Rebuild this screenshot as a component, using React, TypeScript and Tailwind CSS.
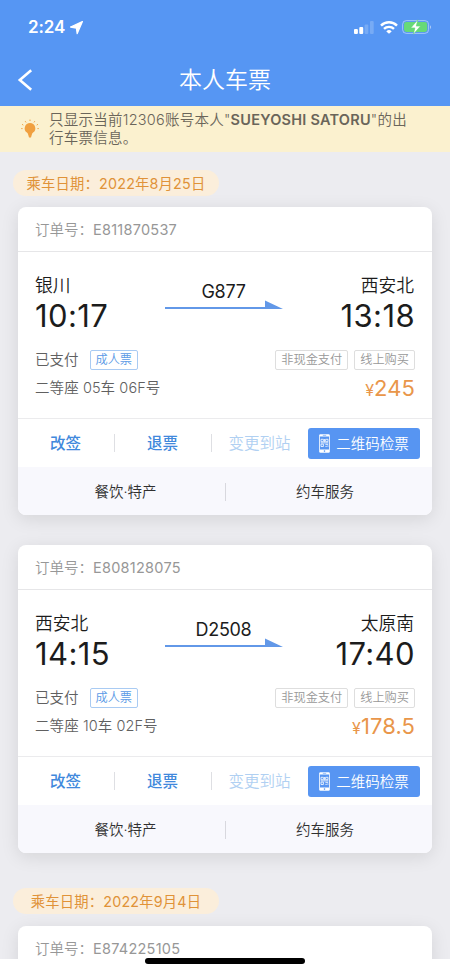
import React from 'react';

// --- Types ---
interface Ticket {
  order: string;
  from: string;
  to: string;
  depart: string;
  arrive: string;
  train: string;
  seat: string;
  price: string;
}

const tickets: Ticket[] = [
  { order: 'E811870537', from: '银川', to: '西安北', depart: '10:17', arrive: '13:18', train: 'G877', seat: '二等座 05车 06F号', price: '245' },
  { order: 'E808128075', from: '西安北', to: '太原南', depart: '14:15', arrive: '17:40', train: 'D2508', seat: '二等座 10车 02F号', price: '178.5' },
];

// --- Status bar ---
const StatusBar = () => (
  <div className="h-[53px] flex items-center justify-between pl-[28px] pr-[18px] pt-px">
    <div className="flex items-center gap-[4px]">
      <span className="text-[17px] leading-5 font-semibold tracking-[-0.1px]">2:24</span>
      <svg width="15" height="15" viewBox="0 0 15 15" fill="currentColor" stroke="currentColor" strokeWidth="1.3" strokeLinejoin="round">
        <path d="M13.4 1.6 1.6 7l5.8 1 .8 5.6Z" />
      </svg>
    </div>
    <div className="flex items-center">
      <svg width="20" height="13" viewBox="0 0 20 13" fill="currentColor">
        <rect x="0" y="8" width="3.9" height="5" rx="1" />
        <rect x="5.3" y="6" width="3.9" height="7" rx="1" />
        <rect x="10.6" y="3.5" width="3.7" height="9.5" rx="1" opacity=".2" />
        <rect x="16" y="0" width="3.7" height="13" rx="1" opacity=".2" />
      </svg>
      <svg className="ml-[6px]" width="18" height="13" viewBox="0 0 18 13" fill="none" stroke="currentColor" strokeWidth="2.4">
        <path d="M1 4.6a11.3 11.3 0 0 1 16 0" />
        <path d="M4 7.9a7.1 7.1 0 0 1 10 0" />
        <path d="M9 12.8 6.3 10.4a3.8 3.8 0 0 1 5.4 0Z" fill="currentColor" stroke="none" />
      </svg>
      <svg className="ml-[4px]" width="30" height="16" viewBox="0 0 30 16">
        <rect x=".6" y="1.6" width="26" height="12.8" rx="3.8" fill="none" stroke="#fff" strokeOpacity=".45" />
        <rect x="2" y="3" width="23.2" height="10" rx="2.4" fill="#67d978" />
        <path d="M28 6.2v3.8c1.4-.6 1.4-3.2 0-3.8Z" fill="#fff" fillOpacity=".5" />
        <path d="M15.8.8 8.8 8.9h4.1L11.4 15.2l7.1-8.1h-4.2L15.8.8Z" fill="#fff" stroke="#67d978" strokeWidth=".6" />
      </svg>
    </div>
  </div>
);

const BulbIcon = () => (
  <svg width="18" height="20" viewBox="0 0 18 20" fill="#f0a040">
    <path d="M9 4a5.3 5.3 0 0 0-3.1 9.6c.7.5 1 1 1.1 1.7h4c.1-.7.4-1.2 1.1-1.7A5.3 5.3 0 0 0 9 4Z" />
    <path d="M7 15h4L10 18.4H8Z" />
    <g stroke="#f0a040" strokeWidth="1" strokeLinecap="round">
      <path d="M9 1v.6M4.4 2.5l.4.6M13.6 2.5l-.4.6M1.4 5.5l.6.4M16.6 5.5l-.6.4M.6 9.6h.6M16.8 9.6h.6" />
    </g>
  </svg>
);

const QrPhoneIcon = () => (
  <svg width="11" height="19" viewBox="0 0 11 19">
    <rect x=".2" y=".2" width="10.6" height="18.6" rx="1.2" fill="#fff" />
    <path d="M1 2.6h9v12.8H1z" fill="#5795f2" />
    <path d="M3.8 1.4h3.4" stroke="#5795f2" strokeWidth=".6" />
    <circle cx="5.5" cy="17.1" r=".8" fill="#5795f2" />
    <g fill="none" stroke="#fff" strokeWidth=".8">
      <path d="M2 5.3h2.4v2.4H2zM6.6 5.3H9v2.4H6.6zM2 10.1h2.4v2.4H2zM5.5 5v3.2M1.6 8.9h7.8M6.4 10.4h2.8M6.4 12.4h1.4M8.9 11.4v1.4" />
    </g>
  </svg>
);

const Banner = () => (
  <div className="h-[46px] flex items-start bg-[#fbf1cf] pl-[21px] pt-[5px] text-[#6a655a]">
    <div className="mt-[8px]"><BulbIcon /></div>
    <p className="ml-[10px] text-[14.5px] leading-[18px] tracking-[0.24px] whitespace-nowrap">
      只显示当前12306账号本人"<b className="font-semibold">SUEYOSHI SATORU</b>"的出
      <br />
      行车票信息。
    </p>
  </div>
);

const DatePill = ({ date }: { date: string }) => (
  <div className="ml-[13px] w-[206px] h-[26px] pt-px rounded-full bg-[#fbeedb] text-[#e09238] flex items-center justify-center text-[14.3px] font-normal tracking-[0.2px]">
    乘车日期：{date}
  </div>
);

const OrderHead = ({ order }: { order: string }) => (
  <div className="h-[45px] pt-px border-b border-[#e6e6e8] px-[17px] flex items-center text-[14.5px] text-[#979797]">
    订单号：<span className="font-normal tracking-[0.25px]">{order}</span>
  </div>
);

const Tag = ({ children }: { children: React.ReactNode }) => (
  <span className="h-5 px-[5px] flex items-center border border-[#dedede] rounded-xs text-[12.2px] text-[#989898]">{children}</span>
);

// --- Ticket card ---
const TicketCard = ({ ticket }: { ticket: Ticket }) => (
  <div className="mx-[18px] h-[308px] rounded-lg overflow-hidden bg-white shadow-[0_4px_18px_rgba(0,0,0,0.1)]">
    <OrderHead order={ticket.order} />
    <div className="h-[167px] border-b border-[#ebebed] px-[17px] pt-[22px]">
      <div className="flex justify-between text-[#1c1c1c]">
        <div className="w-[120px]">
          <div className="text-[17.8px] leading-6">{ticket.from}</div>
          <div className="text-[31px] leading-[36px] font-normal tracking-[0.4px]">{ticket.depart}</div>
        </div>
        <div className="w-[120px] flex flex-col items-center pt-[8px]">
          <div className="text-[18px] leading-5 font-normal tracking-[-0.3px] pr-[3px]">{ticket.train}</div>
          <svg className="-ml-[2px] -mt-[2px]" width="120" height="10" viewBox="0 0 120 10" fill="#6298e8">
            <path d="M1 7h100V.5L119 9H1Z" />
          </svg>
        </div>
        <div className="w-[120px] text-right">
          <div className="text-[17.8px] leading-6 pr-px">{ticket.to}</div>
          <div className="text-[31px] leading-[36px] font-normal tracking-[0.4px]">{ticket.arrive}</div>
        </div>
      </div>
      <div className="mt-[16px] h-5 flex items-center text-[14.5px] text-[#606060]">
        <span>已支付</span>
        <span className="ml-[11px] h-5 px-[5px] flex items-center border border-[#a9cbf3] rounded-xs text-[12.2px] text-[#5a9ae6]">成人票</span>
        <div className="ml-auto flex gap-[6px]">
          <Tag>非现金支付</Tag>
          <Tag>线上购买</Tag>
        </div>
      </div>
      <div className="mt-[6px] h-6 flex items-center justify-between text-[14.5px] text-[#606060]">
        <span className="tracking-[0.08px]">{ticket.seat}</span>
        <span className="text-[#e9964a] text-[22px] font-normal tracking-[0.1px]"><span className="text-base">¥</span>{ticket.price}</span>
      </div>
    </div>
    <div className="h-[48px] flex items-center text-[15.5px] text-[#4189dc]">
      <div className="w-[95px] pt-[2px] text-center font-medium">改签</div>
      <div className="ml-px w-px h-[18px] bg-[#dedfe3]" />
      <div className="w-[95px] pt-[2px] text-center font-medium">退票</div>
      <div className="ml-px w-px h-[18px] bg-[#dedfe3]" />
      <div className="w-[96px] pt-[2px] pr-px text-center text-[#b0d0f2]">变更到站</div>
      <button className="w-[112px] h-[31px] rounded-[3px] bg-[#5795f2] text-white text-[14.5px] flex items-center justify-center gap-[6px]">
        <QrPhoneIcon />
        <span className="pt-px">二维码检票</span>
      </button>
    </div>
    <div className="h-[48px] bg-[#f8f8fd] flex items-center text-[14.5px] text-[#303030] pt-px">
      <div className="w-[207px] pl-[8px] text-center">餐饮·特产</div>
      <div className="w-px h-[18px] bg-[#d8d8de]" />
      <div className="flex-1 pr-[8px] text-center">约车服务</div>
    </div>
  </div>
);

export default function App() {
  return (
    <div className="relative w-[450px] h-[974px] flex flex-col overflow-hidden bg-white font-[350] font-['Inter','Noto_Sans_CJK_SC',sans-serif]">
      <header className="h-[106px] shrink-0 bg-[#5696f3] text-white">
        <StatusBar />
        <div className="h-[53px] grid grid-cols-[60px_1fr_60px] items-center">
          <svg className="ml-[17px]" width="16" height="22" viewBox="0 0 16 22" fill="none" stroke="currentColor" strokeWidth="2.6">
            <path d="M14.2 1.2 2.8 11l11.4 9.8" />
          </svg>
          <h1 className="text-[23px] leading-8 text-center">本人车票</h1>
        </div>
      </header>
      <div className="shrink-0"><Banner /></div>
      <main className="flex-1 min-h-0 overflow-hidden bg-[#ececf0] pt-[18px]">
        <DatePill date="2022年8月25日" />
        <div className="mt-[11px] flex flex-col gap-[30px]">
          {tickets.map((ticket) => (
            <TicketCard key={ticket.order} ticket={ticket} />
          ))}
        </div>
        <div className="mt-[35px]"><DatePill date="2022年9月4日" /></div>
        <div className="mt-[12px] mx-[18px] h-[308px] rounded-lg bg-white shadow-[0_4px_18px_rgba(0,0,0,0.1)]">
          <OrderHead order="E874225105" />
        </div>
      </main>
      <div className="h-[15px] shrink-0 bg-white" />
      <div className="absolute left-[145px] top-[958px] w-[160px] h-[6px] rounded-full bg-black" />
    </div>
  );
}
